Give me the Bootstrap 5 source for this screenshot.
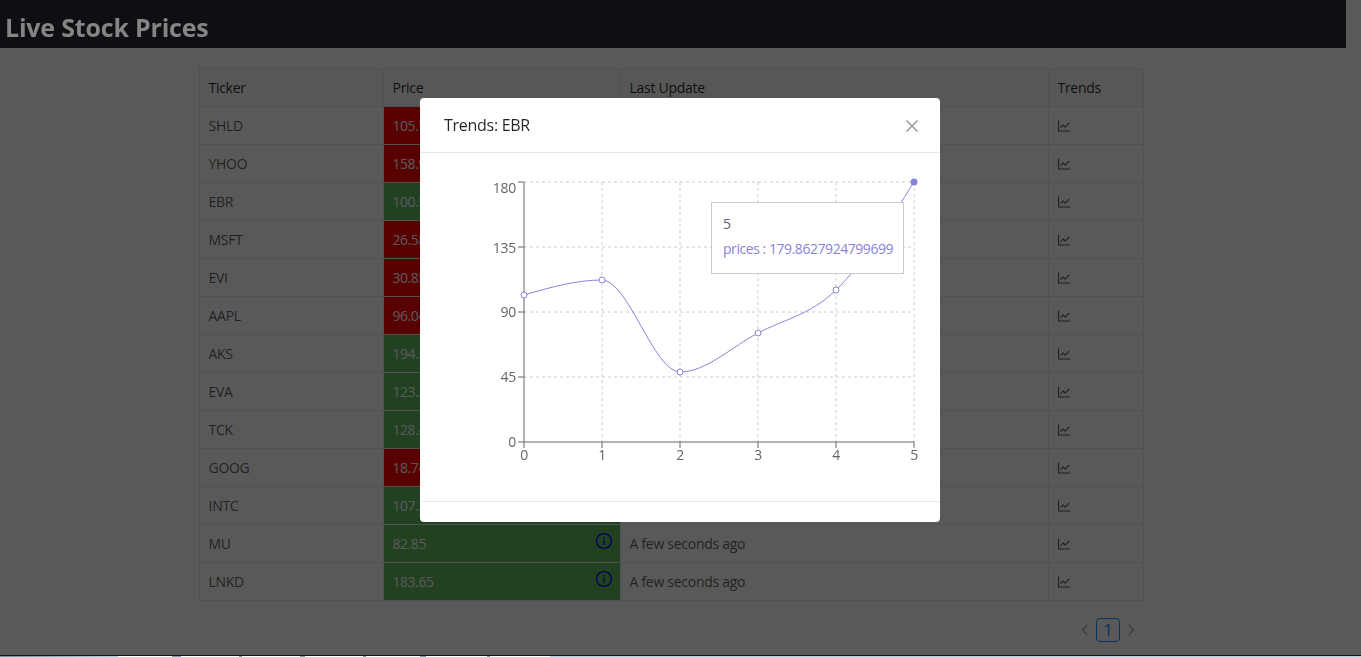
<!DOCTYPE html>
<html lang="en">
<head>
    <meta charset="UTF-8">
    <title>Live Stock Prices</title>
    <link href="https://cdn.jsdelivr.net/npm/bootstrap@5.3.0/dist/css/bootstrap.min.css" rel="stylesheet">
    <style>
        body {
            font-family: "Open Sans", "Liberation Sans", sans-serif;
            font-size: 14px;
            letter-spacing: -.28px;
            color: rgba(0, 0, 0, .65);
            background: #fff;
            padding-right: 15px;
            overflow: hidden;
        }

        .app-head {
            background: #282c34;
            height: 48px;
        }

        .app-title {
            position: relative;
            z-index: 1060;
            color: #858585;
            font-size: 25px;
            font-weight: 700;
            letter-spacing: -.2px;
            line-height: 54px;
            margin: 0 0 0 5px;
        }

        .stock-wrap {
            width: 944px;
            margin: 20px 0 0 199px;
        }

        .stock-table {
            table-layout: fixed;
            margin: 0;
            border-color: #e8e8e8;
            --bs-table-color: rgba(0, 0, 0, .65);
        }

        .stock-table th, .stock-table td {
            padding: 8px 8px 8px 8.5px;
            line-height: 21px;
            font-weight: 400;
        }

        .stock-table th {
            background: #fafafa;
            color: rgba(0, 0, 0, .85);
            height: 38px;
        }

        .stock-table td.price-up, .stock-table td.price-down {
            color: #fff;
            letter-spacing: -.45px;
            --bs-table-bg-type: none;
        }

        .stock-table td.price-up { background: #60ba5c; }
        .stock-table td.price-down { background: #f00; }

        .info-ico {
            float: right;
            width: 16px;
            height: 16px;
            fill: #00f;
        }

        .trend-ico {
            width: 14px;
            height: 14px;
            margin: 0 0 2px -1px;
            fill: rgba(0, 0, 0, .65);
        }

        .pager {
            margin-top: 17px;
        }

        .pager .page-link {
            display: flex;
            align-items: center;
            justify-content: center;
            width: 24px;
            height: 24px;
            padding: 0;
            background: none;
            border: 1px solid transparent;
            border-radius: 4px !important;
            color: rgba(0, 0, 0, .3);
        }

        .pager .page-link svg {
            width: 10px;
            height: 12px;
            fill: none;
            stroke: rgba(0, 0, 0, .3);
            stroke-width: 1.2;
        }

        .pager .active .page-link {
            border-color: #1890ff;
            color: #1890ff;
            background: #fff;
        }

        .modal-backdrop {
            --bs-backdrop-opacity: .65;
            height: 655px;
            width: 1361px;
        }

        .trend-dialog {
            width: 520px;
            max-width: 520px;
            margin: 98px 0 0 420px;
        }

        .trend-dialog .modal-content {
            border: 0;
            border-radius: 4px;
        }

        .trend-dialog .modal-header {
            padding: 0 24px;
            height: 55px;
            border-bottom: 1px solid #e8e8e8;
        }

        .trend-dialog .modal-title {
            font-size: 16px;
            font-weight: 400;
            color: rgba(0, 0, 0, .85);
        }

        .trend-close {
            width: 14px;
            height: 14px;
            margin: 2px -3px 0 0;
            stroke: rgba(0, 0, 0, .45);
            stroke-width: 1.2;
        }

        .trend-body {
            position: relative;
            height: 348px;
            padding: 0;
        }

        .trend-body svg {
            display: block;
        }

        .trend-tip {
            position: absolute;
            left: 291px;
            top: 49px;
            width: 193px;
            height: 72px;
            padding: 8px 10px 8px 11px;
            background: #fff;
            border: 1px solid #ccc;
            white-space: nowrap;
            line-height: 25px;
            letter-spacing: -.45px;
            color: #5f5f70;
        }

        .trend-tip-val {
            color: #8884d8;
        }

        .trend-dialog .modal-footer {
            height: 21px;
            padding: 0;
            border-top: 1px solid #e8e8e8;
        }

        .chart-axis text {
            font-size: 14px;
            fill: #666;
        }

        .taskbar-strip {
            z-index: 1070;
            height: 2px;
            background: #10151c;
        }

        .taskbar-strip div {
            margin-top: 1px;
            height: 1px;
            background: linear-gradient(90deg, #7b8b97 0, #b9cfe0 118px, #fff 118px, #fff 172px, #8a98a5 172px, #8a98a5 181px, #fff 181px, #fff 239px, #8a98a5 239px, #8a98a5 242px, #fff 242px, #fff 300px, #8a98a5 300px, #8a98a5 305px, #fff 305px, #fff 363px, #8a98a5 363px, #8a98a5 366px, #fff 366px, #fff 420px, #8a98a5 420px, #8a98a5 426px, #fff 426px, #fff 487px, #8a98a5 487px, #8a98a5 490px, #fff 490px, #fff 550px, #b9cfe0 550px);
        }
    </style>
</head>
<body>
    <svg width="0" height="0" class="position-absolute">
        <symbol id="ico-info" viewBox="64 64 896 896">
            <path d="M512 64C264.6 64 64 264.6 64 512s200.6 448 448 448 448-200.6 448-448S759.4 64 512 64zm0 820c-205.4 0-372-166.6-372-372s166.6-372 372-372 372 166.6 372 372-166.6 372-372 372z"/>
            <path d="M464 336a48 48 0 1 0 96 0 48 48 0 1 0-96 0zm72 112h-48c-4.4 0-8 3.6-8 8v272c0 4.4 3.6 8 8 8h48c4.4 0 8-3.6 8-8V456c0-4.4-3.6-8-8-8z"/>
        </symbol>
        <symbol id="ico-trend" viewBox="64 64 896 896">
            <path d="M888 792H200V168c0-4.4-3.6-8-8-8h-56c-4.4 0-8 3.6-8 8v688c0 4.4 3.6 8 8 8h752c4.4 0 8-3.6 8-8v-56c0-4.4-3.6-8-8-8zM305.8 637.7c3.1 3.1 8.1 3.1 11.3 0l138.3-137.6L583 628.5c3.1 3.1 8.2 3.1 11.3 0l275.4-275.3c3.1-3.1 3.1-8.2 0-11.3l-39.6-39.6a8.03 8.03 0 0 0-11.3 0l-230 229.9L461.4 404a8.03 8.03 0 0 0-11.3 0L266.3 586.7a8.03 8.03 0 0 0 0 11.3l39.5 39.7z"/>
        </symbol>
    </svg>

    <header class="app-head">
        <h1 class="app-title">Live Stock Prices</h1>
    </header>

    <main class="stock-wrap">
        <table class="table table-bordered stock-table">
            <colgroup>
                <col style="width: 184px">
                <col style="width: 237px">
                <col style="width: 428px">
                <col style="width: 95px">
            </colgroup>
            <thead>
                <tr><th>Ticker</th><th>Price</th><th>Last Update</th><th>Trends</th></tr>
            </thead>
            <tbody id="stock-rows"></tbody>
        </table>
        <nav>
            <ul class="pagination justify-content-end pager">
                <li class="page-item"><a class="page-link" href="#"><svg viewBox="0 0 10 12"><path d="M7.5 1L2.5 6l5 5"/></svg></a></li>
                <li class="page-item active"><a class="page-link" href="#">1</a></li>
                <li class="page-item"><a class="page-link" href="#"><svg viewBox="0 0 10 12"><path d="M2.5 1l5 5-5 5"/></svg></a></li>
            </ul>
        </nav>
    </main>

    <div class="modal-backdrop show"></div>

    <div class="modal d-block">
        <div class="modal-dialog trend-dialog">
            <div class="modal-content">
                <div class="modal-header">
                    <h5 class="modal-title">Trends: EBR</h5>
                    <svg class="trend-close ms-auto" viewBox="0 0 14 14"><path d="M1.5 1.5l11 11M12.500 1.500l-11 11"/></svg>
                </div>
                <div class="modal-body trend-body">
                    <svg width="520" height="348" viewBox="420 153 520 348">
                        <g stroke="#ccc" stroke-dasharray="3 3" fill="none">
                            <path d="M524 182H914M524 247H914M524 312H914M524 377H914"/>
                            <path d="M602 182V442M680 182V442M758 182V442M836 182V442M914 182V442"/>
                        </g>
                        <g class="chart-axis">
                            <path d="M524 182V442H914M518 182H524M518 247H524M518 312H524M518 377H524M518 442H524M524 442V448M602 442V448M680 442V448M758 442V448M836 442V448M914 442V448" stroke="#666" fill="none"/>
                            <g text-anchor="end">
                                <text x="516" y="193">180</text>
                                <text x="516" y="253">135</text>
                                <text x="516" y="317">90</text>
                                <text x="516" y="382">45</text>
                                <text x="516" y="447">0</text>
                            </g>
                            <g text-anchor="middle">
                                <text x="524" y="460">0</text>
                                <text x="602" y="460">1</text>
                                <text x="680" y="460">2</text>
                                <text x="758" y="460">3</text>
                                <text x="836" y="460">4</text>
                                <text x="914" y="460">5</text>
                            </g>
                        </g>
                        <path d="M524 295C550 287.5 576 280 602 280C628 280 654 372 680 372C706 372 732 346.66 758 333C784 319.34 810 315.17 836 290C862 264.83 888 223.4 914 182" fill="none" stroke="#8884d8"/>
                        <g fill="#fff" stroke="#8884d8">
                            <circle cx="524" cy="295" r="3"/>
                            <circle cx="602" cy="280" r="3"/>
                            <circle cx="680" cy="372" r="3"/>
                            <circle cx="758" cy="333" r="3"/>
                            <circle cx="836" cy="290" r="3"/>
                        </g>
                        <circle cx="914" cy="182" r="3.5" fill="#8884d8"/>
                    </svg>
                    <div class="trend-tip">
                        <div>5</div>
                        <div class="trend-tip-val">prices : 179.8627924799699</div>
                    </div>
                </div>
                <div class="modal-footer"></div>
            </div>
        </div>
    </div>

    <div class="fixed-bottom taskbar-strip"><div></div></div>

    <script src="https://cdn.jsdelivr.net/npm/bootstrap@5.3.0/dist/js/bootstrap.bundle.min.js"></script>
    <script>
        const stocks = [
            ['SHLD', '105.71', 0], ['YHOO', '158.92', 0], ['EBR', '100.96', 1],
            ['MSFT', '26.58', 0], ['EVI', '30.85', 0], ['AAPL', '96.04', 0],
            ['AKS', '194.50', 1], ['EVA', '123.27', 1], ['TCK', '128.43', 1],
            ['GOOG', '18.74', 0], ['INTC', '107.31', 1], ['MU', '82.85', 1],
            ['LNKD', '183.65', 1]
        ];

        document.getElementById('stock-rows').innerHTML = stocks.map(s => `
            <tr>
                <td>${s[0]}</td>
                <td class="${s[2] ? 'price-up' : 'price-down'}">${s[1]}<svg class="info-ico"><use href="#ico-info"/></svg></td>
                <td>A few seconds ago</td>
                <td><svg class="trend-ico"><use href="#ico-trend"/></svg></td>
            </tr>`).join('');
    </script>
</body>
</html>
